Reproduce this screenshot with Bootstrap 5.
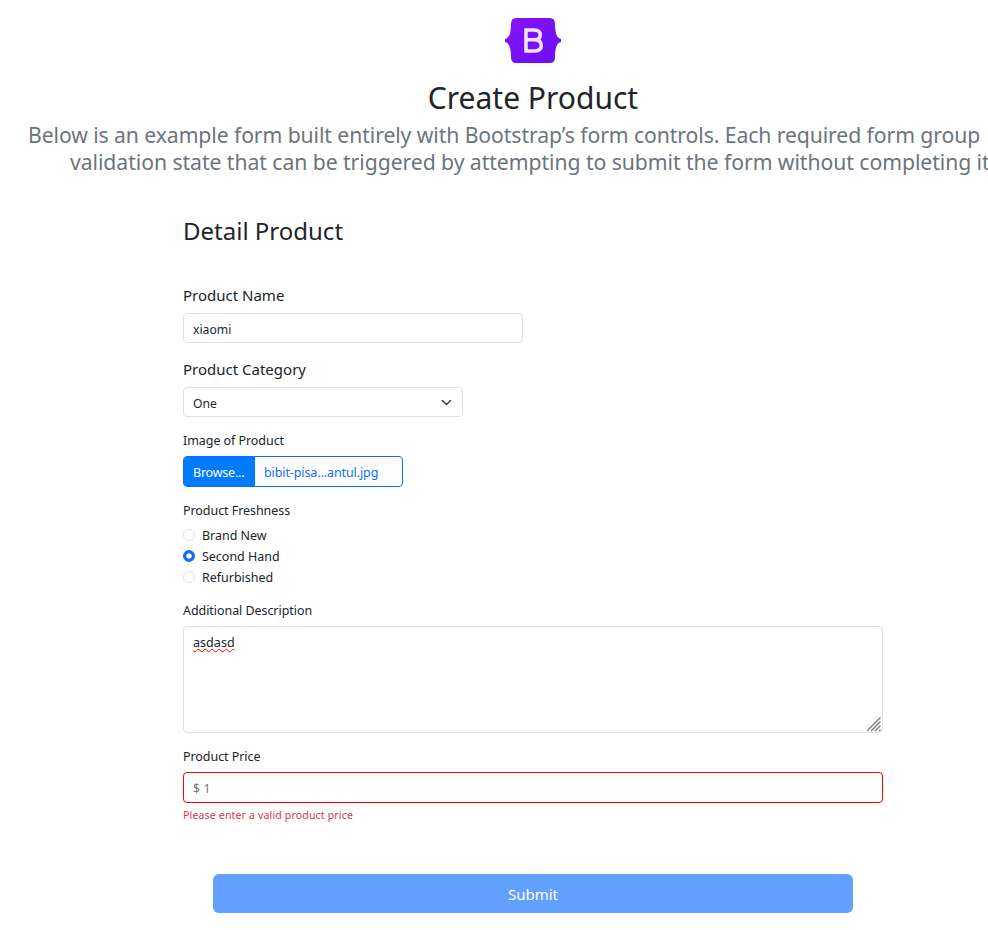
<!DOCTYPE html>
<html lang="en">
<head>
<meta charset="utf-8">
<meta name="viewport" content="width=device-width, initial-scale=1">
<title>Create Product</title>
<link rel="stylesheet" href="https://cdn.jsdelivr.net/npm/bootstrap@5.3.0/dist/css/bootstrap.min.css">
<style>
body{font-family:"Noto Sans","Open Sans",sans-serif;overflow:hidden;color:#212529}
.page{width:1066px;height:930px;padding-top:18px}
.logo{display:block;width:56px;height:45px}
h1{font-size:30px;font-weight:400;line-height:40px;height:40px;margin:15px 0 3px}
.intro{font-size:21.2px;line-height:27px;color:#6c757d;white-space:nowrap}
.intro div{height:27px}
.first{padding-left:28px;letter-spacing:-.09px}
.second{padding-left:70px;letter-spacing:-.06px}
.sheet{width:700px;margin:0 auto}
h2{font-size:24px;font-weight:400;line-height:32px;height:32px;margin:40px 0 36px}
.lbl{display:block;font-size:15px;line-height:24px;height:24px;margin:0 0 6px}
.field + .lbl{margin-top:14px}
.lbl-s{display:block;font-size:12.5px;letter-spacing:-.06px;line-height:20px;height:20px;margin:14px 0 5px}
.field{font-size:12.2px;height:30px;min-height:0;padding:2px 9px 0;line-height:26px;border-color:#dee2e6;border-radius:4px;color:#212529}
.w340{width:340px}
.w280{width:280px;padding-top:3px;background-size:11px 11px;background-position:right 10px center}
.filebox{width:220px;height:31px;border:1px solid #0d6efd;border-radius:4px;font-size:12.5px;letter-spacing:-.1px;line-height:31px;overflow:hidden}
.browse{width:71px;background:#007bff;color:#fff;padding-left:9px;letter-spacing:-.22px}
.fname{color:#0d6efd;padding-left:9px}
.choices{height:63px;margin-top:-1px}
.opt{height:21px;font-size:12.5px;letter-spacing:-.02px;line-height:21px;gap:7px}
.opt .form-check-input{width:12px;height:12px;margin:-2px 0 0;border-color:#dee2e6;flex:none}
.opt .form-check-input:checked{border-color:#0d6efd;background:radial-gradient(circle,#fff 2.300px,#0d6efd 3.100px)}
.choices + .lbl-s{margin-top:13px}
.area{height:107px;position:relative;line-height:18px;padding-top:7px;font-size:12.6px}
.typo{text-decoration:underline wavy #f00 1.2px;text-underline-offset:1px;text-decoration-skip-ink:none}
.grip{position:absolute;right:0;bottom:0;width:16px;height:15px}
.price{height:31px;border-color:#f00}
.price::placeholder{color:#6c757d;letter-spacing:.2px}
.err{font-size:10.6px;letter-spacing:.13px;line-height:16px;height:16px;color:#dc3545;margin:4px 0 51px}
.send{display:block;width:640px;height:39px;border:0;border-radius:6px;padding:2px 0 0;font-size:15px;background:#62a0ff;color:#fff}
</style>
<script src="https://cdn.jsdelivr.net/npm/bootstrap@5.3.0/dist/js/bootstrap.bundle.min.js"></script>
</head>
<body>
<main class="page">
<header>
<svg class="logo mx-auto" viewBox="0 0 56 45"><defs><linearGradient id="g" x1="0" y1="0" x2="1" y2="1"><stop offset="0" stop-color="#8512fb"/><stop offset="1" stop-color="#6c10f2"/></linearGradient></defs><path fill="url(#g)" d="M11 0H45Q50 0 50 6C50 15 52 20.500 56 21V24C52 24.500 50 30 50 39Q50 45 45 45H11Q6 45 6 39C6 30 4 24.500 0 24V21C4 20.500 6 15 6 6Q6 0 11 0Z"/><path fill="none" stroke="#f1e5fc" stroke-width="3.500" d="M21 12H29C33.500 12 35.300 14 35.300 16.800C35.300 20 33 21.800 29 21.800H21M29 21.800C34 21.800 36.300 24 36.300 27.500C36.300 31 34 32.900 29.500 32.900H21V10.300"/></svg>
<h1 class="text-center">Create Product</h1>
<div class="intro"><div class="first">Below is an example form built entirely with Bootstrap’s form controls. Each required form group</div><div class="second">validation state that can be triggered by attempting to submit the form without completing it</div></div>
</header>
<form class="sheet">
<h2>Detail Product</h2>
<label class="lbl" for="name">Product Name</label>
<input class="form-control field w340" id="name" value="xiaomi">
<label class="lbl" for="category">Product Category</label>
<select class="form-select field w280" id="category"><option>One</option></select>
<label class="lbl-s">Image of Product</label>
<div class="filebox d-flex"><span class="browse">Browse...</span><span class="fname">bibit-pisa...antul.jpg</span></div>
<div class="lbl-s">Product Freshness</div>
<div class="choices">
<label class="opt d-flex align-items-center"><input class="form-check-input" type="radio" name="fresh">Brand New</label>
<label class="opt d-flex align-items-center"><input class="form-check-input" type="radio" name="fresh" checked>Second Hand</label>
<label class="opt d-flex align-items-center"><input class="form-check-input" type="radio" name="fresh">Refurbished</label>
</div>
<label class="lbl-s">Additional Description</label>
<div class="form-control field area"><span class="typo">asdasd</span><svg class="grip" viewBox="0 0 16 15"><path stroke="#777" stroke-width="1.300" d="M1 14L14.500 .5M5 14L14.500 4.500M9 14L14.500 8.500M13 14L14.500 12.500"/></svg></div>
<label class="lbl-s" for="price">Product Price</label>
<input class="form-control field price" id="price" placeholder="$ 1">
<div class="err">Please enter a valid product price</div>
<button class="btn send mx-auto" type="button">Submit</button>
</form>
</main>
</body>
</html>
